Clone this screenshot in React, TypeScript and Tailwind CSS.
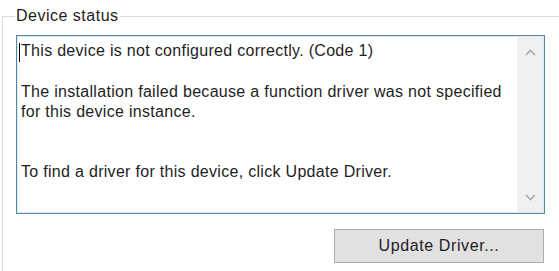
import React from "react";

function ChevronUp() {
  return (
    <svg width="11" height="7" viewBox="0 0 11 7" fill="none">
      <path d="M1 6 L5.5 1.5 L10 6" stroke="#a8a8a8" strokeWidth="1.6" />
    </svg>
  );
}

function ChevronDown() {
  return (
    <svg width="11" height="7" viewBox="0 0 11 7" fill="none">
      <path d="M1 1 L5.5 5.5 L10 1" stroke="#a8a8a8" strokeWidth="1.6" />
    </svg>
  );
}

export default function App() {
  return (
    <div
      className="w-[559px] h-[271px] bg-white overflow-hidden pt-[16px] pl-[2px] text-[16px] text-[#1e1e1e]"
      style={{ fontFamily: '"Liberation Sans", Arial, sans-serif' }}
    >
      <div className="relative h-full border-l border-t border-[#dcdcdc] pl-[13px] pt-[18px] flex flex-col items-start">
        <span className="absolute left-[12px] top-[-10px] bg-white px-[1px] leading-[18px] tracking-[0.5px]">
          Device status
        </span>

        <div className="w-[529px] h-[179px] border border-[#5789a3] shadow-[inset_0_0_0_1px_#d6ecf5] bg-white flex">
          <div className="flex-1 pl-[4px] pt-[5px] leading-[20px] tracking-[0.3px] whitespace-nowrap">
            <p>
              <span className="relative">
                <span className="absolute -left-[2px] top-[1px] h-[19px] w-px bg-black" />
                This device is not configured correctly. (Code 1)
              </span>
            </p>
            <p className="mt-[21px]">
              The installation failed because a function driver was not specified
              <br />
              for this device instance.
            </p>
            <p className="mt-[40px]">To find a driver for this device, click Update Driver.</p>
          </div>
          <div className="w-[26px] my-[1px] mr-[1px] bg-[#f0f0f0] flex flex-col items-center justify-between pt-[12px] pb-[11px]">
            <ChevronUp />
            <ChevronDown />
          </div>
        </div>

        <button
          type="button"
          className="mt-[15px] ml-[318px] w-[210px] h-[34px] bg-[#e1e1e1] border border-[#adadad] text-[16px] tracking-[0.6px] text-[#1e1e1e] flex items-center justify-center"
        >
          Update Driver...
        </button>
      </div>
    </div>
  );
}
